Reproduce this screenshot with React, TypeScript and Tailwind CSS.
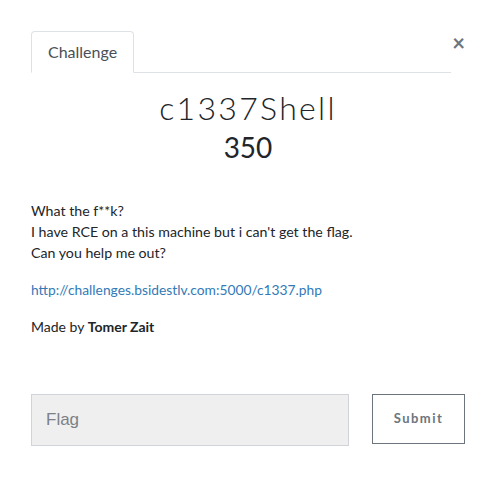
import React from "react";

export default function App() {
  return (
    <div className="w-[496px] h-[494px] bg-white" style={{ fontFamily: "Lato, 'Open Sans', sans-serif" }}>
      <div className="px-[31px] pt-[31px]">
        <div className="flex items-start">
          <div className="flex-1 flex border-b border-[#dee2e6]">
            <div className="h-[42px] -mb-px px-[16px] flex items-center border border-[#dee2e6] border-b-white rounded-t-[4px] bg-white text-[16px] text-[#495057]">
              Challenge
            </div>
          </div>
          <button className="mt-[1px] text-[22px] leading-none font-bold text-[#6c757d] w-[14px] text-right">×</button>
        </div>
        <div className="text-center mt-[16px]">
          <h3 className="text-[32px] leading-[38px] font-light tracking-[2.3px] text-[#212529]">c1337Shell</h3>
          <h4 className="mt-[4px] text-[28px] leading-[32px] text-[#212529]">350</h4>
        </div>
        <div className="mt-[37px] text-[14px] leading-[21px] text-[#212529]">
          <p className="text-[14.2px]">
            What the f**k?
            <br />I have RCE on a this machine but i can't get the flag.
            <br />Can you help me out?
          </p>
          <p className="mt-[16px] text-[13.8px]">
            <a className="text-[#337ab7]">http://challenges.bsidestlv.com:5000/c1337.php</a>
          </p>
          <p className="mt-[16px]">
            Made by <b>Tomer Zait</b>
          </p>
        </div>
        <div className="flex mt-[57px] gap-[23px]">
          <div className="w-[318px] h-[52px] bg-[#efefef] border border-[#d0d4d8] flex items-center px-[14px] text-[17px] text-[#7b8187]" style={{ fontFamily: "'Liberation Sans', Arial, sans-serif" }}>
            Flag
          </div>
          <button className="w-[93px] h-[50px] border border-[#6c757d] text-[13px] font-bold tracking-[1.5px] text-[#6c757d]">
            Submit
          </button>
        </div>
      </div>
    </div>
  );
}
